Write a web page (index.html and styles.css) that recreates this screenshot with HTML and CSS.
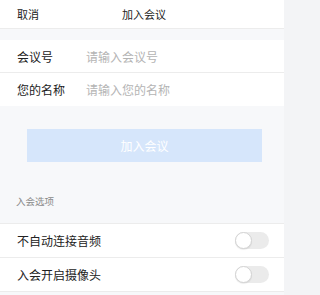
FILE: index.html
```html
<!DOCTYPE html>
<html lang="zh">
<head>
<meta charset="utf-8">
<link rel="stylesheet" href="styles.css">
</head>
<body>
<div class="page">
  <header class="topbar">
    <span class="cancel">取消</span>
    <span class="title">加入会议</span>
    <span></span>
  </header>

  <section class="card form">
    <div class="row">
      <span class="label">会议号</span>
      <span class="placeholder">请输入会议号</span>
    </div>
    <div class="row">
      <span class="label">您的名称</span>
      <span class="placeholder">请输入您的名称</span>
    </div>
  </section>

  <div class="btn-wrap">
    <button class="join-btn">加入会议</button>
  </div>

  <div class="section-title">入会选项</div>

  <section class="card options">
    <div class="row opt">
      <span class="opt-label">不自动连接音频</span>
      <span class="switch"><span class="knob"></span></span>
    </div>
    <div class="row opt">
      <span class="opt-label">入会开启摄像头</span>
      <span class="switch"><span class="knob"></span></span>
    </div>
  </section>
</div>
</body>
</html>
```

FILE: styles.css
```css
html, body {
  margin: 0;
  padding: 0;
  background: #f3f4f6;
}
body {
  font-family: "Noto Sans CJK SC", "Noto Sans", sans-serif;
  color: #222;
}
.page {
  width: 284px;
  min-height: 295px;
  background: #f7f8fa;
  overflow: hidden;
}
.topbar {
  height: 29px;
  background: #fff;
  border-bottom: 1px solid #ececec;
  display: grid;
  grid-template-columns: 1fr auto 1fr;
  align-items: center;
  font-size: 11px;
  box-sizing: border-box;
}
.cancel {
  padding-left: 17px;
  color: #222;
}
.title {
  color: #222;
  margin-left: 4px;
}
.card {
  background: #fff;
}
.form {
  margin-top: 11px;
}
.row {
  height: 33px;
  display: flex;
  align-items: center;
  padding-left: 17px;
  box-sizing: border-box;
}
.form .row:first-child {
  border-bottom: 1px solid #ececec;
}
.label {
  width: 69px;
  font-size: 12px;
  color: #222;
}
.placeholder {
  font-size: 12px;
  color: #b4b4b4;
}
.btn-wrap {
  padding: 23px 22px 0 27px;
}
.join-btn {
  display: block;
  width: 100%;
  height: 33px;
  border: none;
  background: #d6e6fb;
  color: #fff;
  font-family: inherit;
  font-size: 12px;
  padding: 0;
}
.section-title {
  font-size: 9.5px;
  color: #8a8a8a;
  padding: 33px 0 16px 16px;
  line-height: 12px;
}
.options {
  border-top: 1px solid #ececec;
}
.opt {
  height: 34px;
  border-bottom: 1px solid #ececec;
  justify-content: space-between;
  padding-right: 15px;
}
.opt-label {
  font-size: 12px;
  color: #222;
}
.switch {
  position: relative;
  width: 34px;
  height: 17px;
  border-radius: 9px;
  background: #ebebeb;
}
.knob {
  position: absolute;
  left: 0;
  top: 0;
  width: 17px;
  height: 17px;
  border-radius: 50%;
  background: #fff;
  box-sizing: border-box;
  border: 1px solid #d4d4d4;
  box-shadow: 0 1px 1px rgba(0,0,0,0.08);
}
```
